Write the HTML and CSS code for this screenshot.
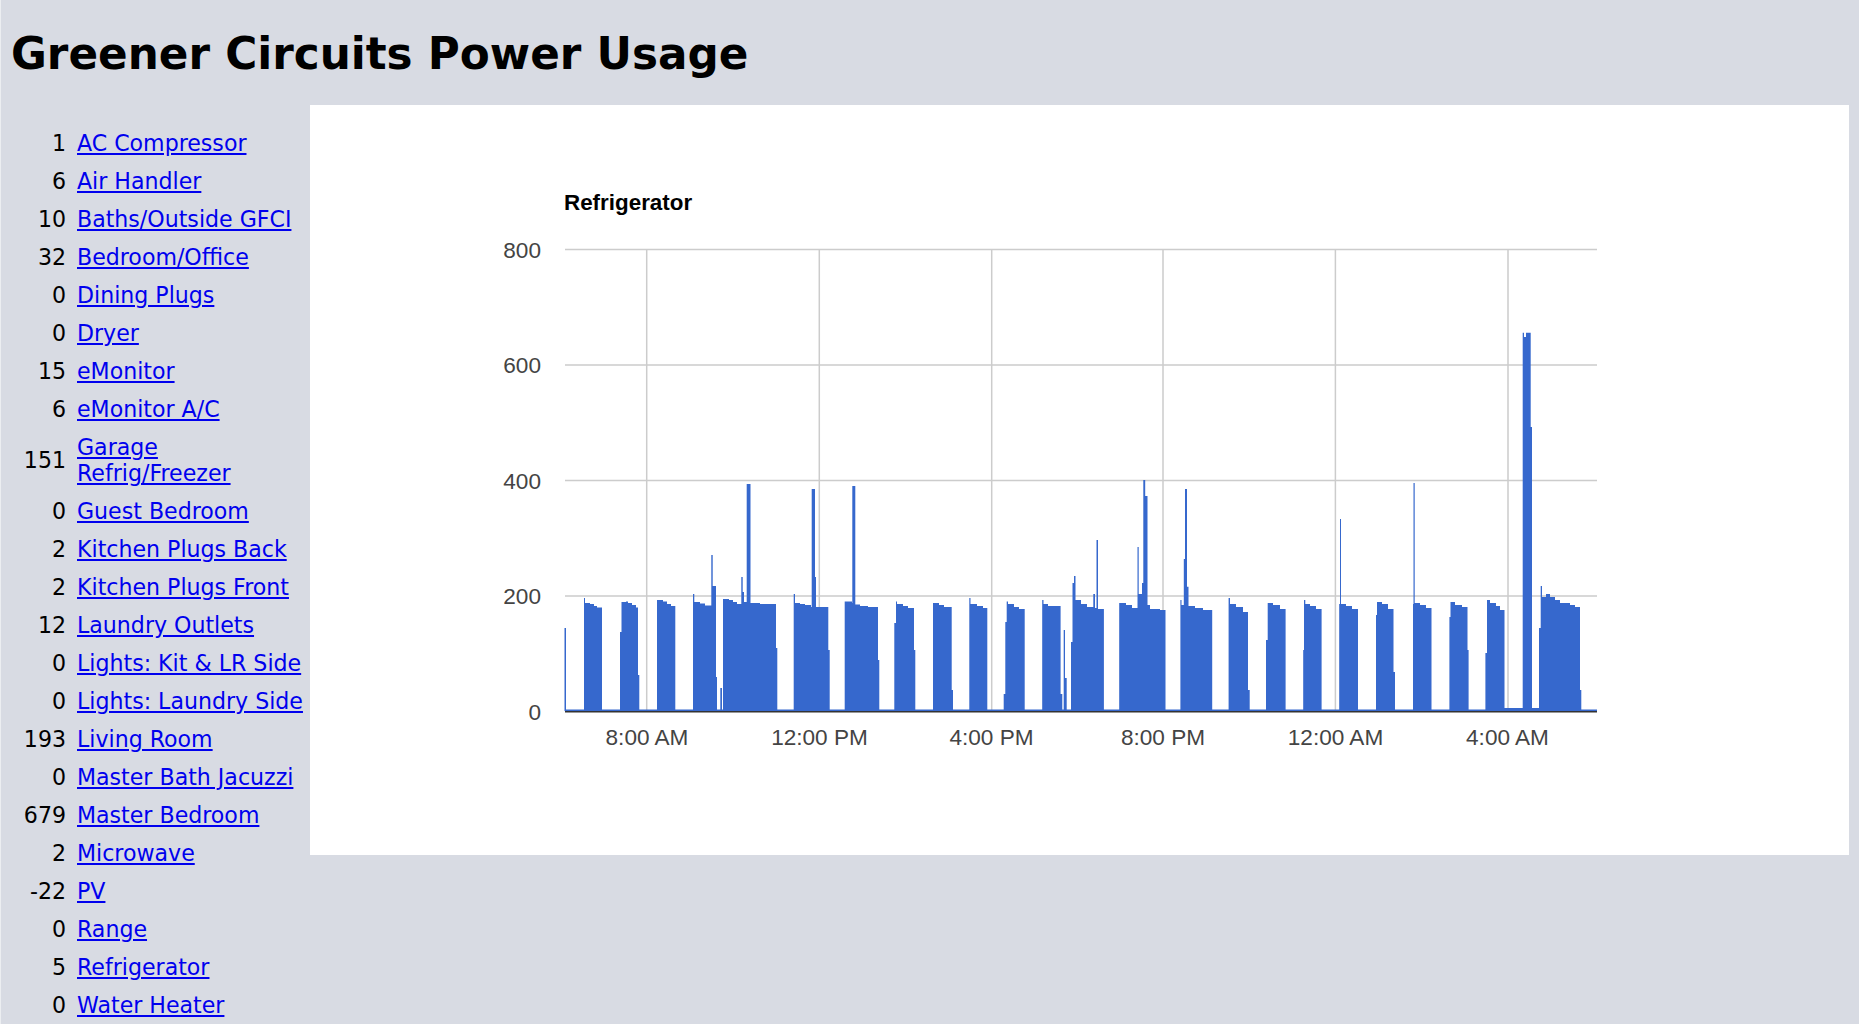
FILE: index.html
```html
<!DOCTYPE html>
<html lang="en">
<head>
<meta charset="utf-8">
<title>Greener Circuits Power Usage</title>
<link rel="stylesheet" href="styles.css">
</head>
<body>
<h1 class="title">Greener Circuits Power Usage</h1>
<div class="main">
  <table class="circuits">
    <tr><td class="num">1</td><td><a href="#">AC Compressor</a></td></tr>
    <tr><td class="num">6</td><td><a href="#">Air Handler</a></td></tr>
    <tr><td class="num">10</td><td><a href="#">Baths/Outside GFCI</a></td></tr>
    <tr><td class="num">32</td><td><a href="#">Bedroom/Office</a></td></tr>
    <tr><td class="num">0</td><td><a href="#">Dining Plugs</a></td></tr>
    <tr><td class="num">0</td><td><a href="#">Dryer</a></td></tr>
    <tr><td class="num">15</td><td><a href="#">eMonitor</a></td></tr>
    <tr><td class="num">6</td><td><a href="#">eMonitor A/C</a></td></tr>
    <tr><td class="num">151</td><td><a href="#">Garage<br>Refrig/Freezer</a></td></tr>
    <tr><td class="num">0</td><td><a href="#">Guest Bedroom</a></td></tr>
    <tr><td class="num">2</td><td><a href="#">Kitchen Plugs Back</a></td></tr>
    <tr><td class="num">2</td><td><a href="#">Kitchen Plugs Front</a></td></tr>
    <tr><td class="num">12</td><td><a href="#">Laundry Outlets</a></td></tr>
    <tr><td class="num">0</td><td><a href="#">Lights: Kit &amp; LR Side</a></td></tr>
    <tr><td class="num">0</td><td><a href="#">Lights: Laundry Side</a></td></tr>
    <tr><td class="num">193</td><td><a href="#">Living Room</a></td></tr>
    <tr><td class="num">0</td><td><a href="#">Master Bath Jacuzzi</a></td></tr>
    <tr><td class="num">679</td><td><a href="#">Master Bedroom</a></td></tr>
    <tr><td class="num">2</td><td><a href="#">Microwave</a></td></tr>
    <tr><td class="num">-22</td><td><a href="#">PV</a></td></tr>
    <tr><td class="num">0</td><td><a href="#">Range</a></td></tr>
    <tr><td class="num">5</td><td><a href="#">Refrigerator</a></td></tr>
    <tr><td class="num">0</td><td><a href="#">Water Heater</a></td></tr>
  </table>
  <div class="panel">
    <svg class="chart" viewBox="310 105 1539 750" width="1539" height="750" role="img" aria-label="Refrigerator power usage">
      <text class="chart-title" x="564" y="210">Refrigerator</text>
      <g class="grid">
        <path d="M565 249.5H1597M565 365H1597M565 480.5H1597M565 596H1597"/>
        <path d="M646.7 249V711M819.3 249V711M991.7 249V711M1163 249V711M1335.4 249V711M1508 249V711"/>
      </g>
      <g class="ylabels">
        <text x="541" y="258">800</text>
        <text x="541" y="372.500">600</text>
        <text x="541" y="489">400</text>
        <text x="541" y="603.500">200</text>
        <text x="541" y="720">0</text>
      </g>
      <g class="xlabels">
        <text x="647" y="745">8:00 AM</text>
        <text x="819.5" y="745">12:00 PM</text>
        <text x="991.5" y="745">4:00 PM</text>
        <text x="1163" y="745">8:00 PM</text>
        <text x="1335.5" y="745">12:00 AM</text>
        <text x="1507.5" y="745">4:00 AM</text>
      </g>
      <path class="series" d="M565 711V709.5H1504.5V708H1539V709.5H1597V711Z
        M564.5 711V628H566V711Z
        M584 711V598H585V603H590V604H594V606H597V607.5H602V711Z
        M620 711V632H621.5V602H626V601.5H628V603H632V605H636V607.5H638V675H639.3V711Z
        M657 711V600H663V601.5H667V604H671V606H675.3V711Z
        M693 711V594H694.3V602H700V603.5H705V605.5H711.3V555H712.7V586H716V677H717V711Z
        M720.3 711V688H722V711Z
        M723 711V599H729V600H733V602H737V604H741.3V577H742.7V592H744V602H746.7V484H750.5V603H760V604H776V648H777.3V711Z
        M793.7 711V594H795V603H800V604H805V605H811V607H811.7V489H815V577H816V607H828.3V650H829.7V711Z
        M844.7 711V601.5H852V603H852.3V486H855.3V604.5H860V606H868V607H878V660H879.3V711Z
        M894.3 711V623H896V601.5H897V604H903V606H908V608H914V650H915.3V711Z
        M933 711V603H939V605H944V607H951.7V690H953V711Z
        M969.3 711V598H970.5V604H977V606H983V608H987.3V711Z
        M1003.7 711V694H1005.3V622H1006.7V601.5H1008V604H1014V607H1019V609H1024.7V711Z
        M1042.2 711V600H1043.5V604H1048V606H1060.6V694H1062.3V711Z
        M1063.7 711V630H1065V678H1066.7V711Z
        M1071 711V642H1072.5V583H1074V576H1075.5V600H1081V604H1087V607H1093.3V594H1095V608H1096.5V540H1098V609H1103.9V711Z
        M1119.2 711V603H1126V605H1132V608H1137.5V547H1138.7V594H1142V583H1143.3V480H1145.2V496H1147.5V605H1150V609H1160V610H1165.5V711Z
        M1180.4 711V600H1181.5V605H1183.8V559H1185V489H1187V586.7H1188.5V606H1195V608H1203V610H1212.2V711Z
        M1228.6 711V598H1230V604H1236V607H1243V612H1248V690H1249.7V711Z
        M1266 711V640H1267.7V603H1273V605H1280V609H1285.6V711Z
        M1303.2 711V650H1304V600H1305.3V604H1310V606H1316V609H1321.6V711Z
        M1339.2 711V604H1340V519H1341V604H1346V606H1352V609H1358V711Z
        M1376 711V615H1377V602H1382V604H1388V609H1393.5V672H1395V711Z
        M1413 711V604H1413.5V483H1414.7V603H1420V605H1426V608H1431.5V711Z
        M1449.4 711V617H1450.5V602H1455V605H1462V607H1467.5V650H1468.6V711Z
        M1485.4 711V653H1487V600H1490V603H1496V606H1500V610H1504.5V711Z
        M1522.7 711V332.7H1524V337H1526V332.7H1530.7V427H1532V711Z
        M1539 711V628H1540.7V586H1542V597H1546V594H1550V597H1555V600H1560V603H1570V605H1575V607H1580V690H1581.3V711Z"/>
      <path class="axis" d="M565 711.7H1597"/>
    </svg>
  </div>
</div>
</body>
</html>
```
FILE: styles.css
```css
html, body {
  margin: 0;
  height: 1024px;
  overflow: hidden;
}
body {
  background: #d8dbe3;
  color: #000;
  font-family: "DejaVu Sans", Verdana, sans-serif;
  border-left: 1px solid #eceef1;
  box-sizing: border-box;
}
.title {
  margin: 0;
  padding: 30px 0 0 10px;
  height: 76px;
  box-sizing: border-box;
  font-size: 43.7px;
  line-height: 48px;
  font-weight: bold;
}
.main {
  display: flex;
  align-items: flex-start;
}
.circuits {
  width: 309px;
  flex: none;
  margin-top: 48px;
  border-collapse: collapse;
  font-size: 22.1px;
  line-height: 26px;
}
.circuits td {
  padding: 6px 0;
}
.circuits .num {
  width: 65px;
  padding-right: 11px;
  text-align: right;
}
.circuits a {
  color: #0000ee;
}
.panel {
  margin-top: 29px;
  background: #fff;
  width: 1539px;
  height: 750px;
}
.chart {
  display: block;
}
.chart text {
  font-family: "Liberation Sans", Arial, sans-serif;
}
.chart-title {
  font-size: 22.4px;
  font-weight: bold;
  fill: #000;
}
.grid path {
  fill: none;
  stroke: #cccccc;
  stroke-width: 1.5;
}
.ylabels text, .xlabels text {
  font-size: 22.6px;
  fill: #444444;
}
.ylabels text {
  text-anchor: end;
}
.xlabels text {
  text-anchor: middle;
}
.series {
  fill: #3668cd;
}
.axis {
  fill: none;
  stroke: #333333;
  stroke-width: 1.5;
}
```
